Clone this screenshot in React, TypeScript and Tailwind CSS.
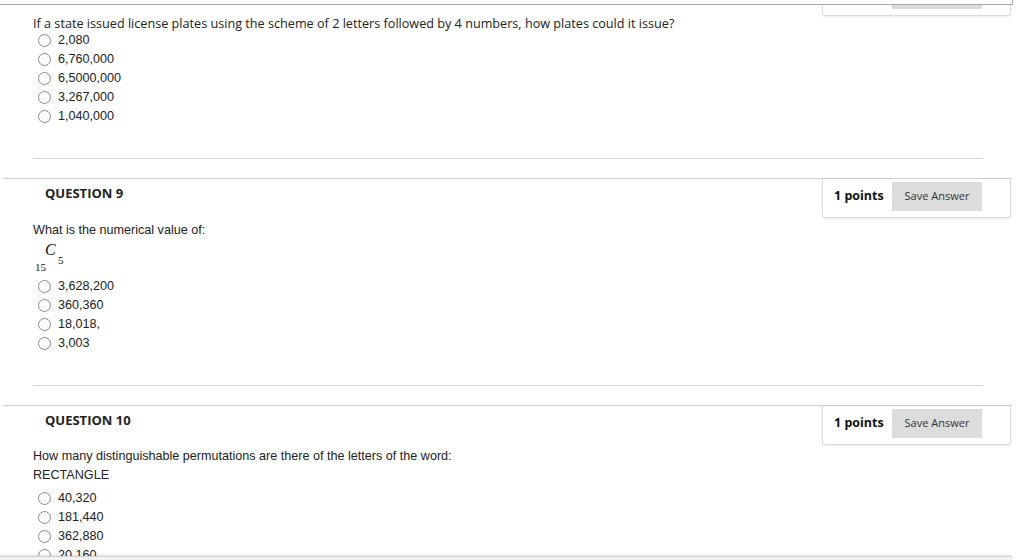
import React from "react";

const openSans = { fontFamily: '"Open Sans", "Liberation Sans", sans-serif' };

function Radio({ label }: { label: string }) {
  return (
    <div className="flex h-[19px] items-center pl-[38px]">
      <span className="h-[13px] w-[13px] rounded-full border border-[#8c8c8c] bg-white" />
      <span className="ml-[7px] text-[12.6px] text-[#222]">{label}</span>
    </div>
  );
}

function Header({ label, hidden }: { label?: string; hidden?: boolean }) {
  return (
    <div className="ml-[3px] flex h-[40px] w-[1009px] items-start justify-between border-t border-[#cfcfcf]">
      <div className="pl-[42px] pt-[5px] text-[13px] font-bold leading-[18px] text-[#222]" style={openSans}>
        {label}
      </div>
      <div
        className="mr-[1px] flex h-[39px] w-[189px] items-start rounded-b-[3px] border-x border-b border-[#dcdcdc] pl-[11px] pt-[3px] shadow-[0_1px_2px_rgba(0,0,0,0.08)]"
        style={openSans}
      >
        <span className="mt-[5px] w-[48px] whitespace-nowrap text-[12.5px] font-bold leading-[18px] text-[#111]">
          {hidden ? "" : "1 points"}
        </span>
        <button className="ml-[10px] h-[29px] w-[90px] bg-[#dcdcdc] text-[11px] text-[#333]">
          {hidden ? "" : "Save Answer"}
        </button>
      </div>
    </div>
  );
}

function Separator() {
  return <div className="ml-[33px] mt-[32px] w-[950px] border-t border-[#d4d4d4]" />;
}

export default function App() {
  return (
    <div className="relative h-[560px] w-[1024px] overflow-hidden bg-white" style={{ fontFamily: '"Liberation Sans", Arial, sans-serif' }}>
      {/* previous question, scrolled off */}
      <div className="-mt-[24px]">
        <Header hidden />
      </div>
      <div className="-mt-[1px] pl-[33px] text-[12.65px] leading-[16px] text-[#222]" style={openSans}>
        If a state issued license plates using the scheme of 2 letters followed by 4 numbers, how plates could it issue?
      </div>
      <div>
        {["2,080", "6,760,000", "6,5000,000", "3,267,000", "1,040,000"].map((o) => (
          <Radio key={o} label={o} />
        ))}
      </div>
      <Separator />

      {/* question 9 */}
      <div className="mt-[19px]">
        <Header label="QUESTION 9" />
      </div>
      <div className="mt-[4px] pl-[33px] text-[12.6px] leading-[17px] text-[#222]">What is the numerical value of:</div>
      <div className="relative h-[38px]" style={{ fontFamily: '"Liberation Serif", "Times New Roman", serif' }}>
        <span className="absolute left-[45px] top-[2px] text-[16px] italic leading-[18px] text-[#111]">C</span>
        <span className="absolute left-[58px] top-[15px] text-[11px] leading-[12px] text-[#111]">5</span>
        <span className="absolute left-[35px] top-[22px] text-[11px] leading-[12px] text-[#111]">15</span>
      </div>
      <div>
        {["3,628,200", "360,360", "18,018,", "3,003"].map((o) => (
          <Radio key={o} label={o} />
        ))}
      </div>
      <Separator />

      {/* question 10 */}
      <div className="mt-[19px]">
        <Header label="QUESTION 10" />
      </div>
      <div className="mt-[2px] pl-[33px] text-[12.6px] leading-[19px] text-[#222]">
        <div>How many distinguishable permutations are there of the letters of the word:</div>
        <div>RECTANGLE</div>
      </div>
      <div className="mt-[4px]">
        {["40,320", "181,440", "362,880", "20,160"].map((o) => (
          <Radio key={o} label={o} />
        ))}
      </div>

      {/* sticky frame edges */}
      <div className="absolute left-0 top-0 h-[5px] w-[1013px] border-b border-r border-[#a8a8a8] bg-white" />
      <div className="absolute left-0 top-[556px] h-[4px] w-[1012px] border-t border-[#d0d0d0] bg-[#f2f2f2] shadow-[0_-1px_3px_rgba(0,0,0,0.12)]" />
    </div>
  );
}
